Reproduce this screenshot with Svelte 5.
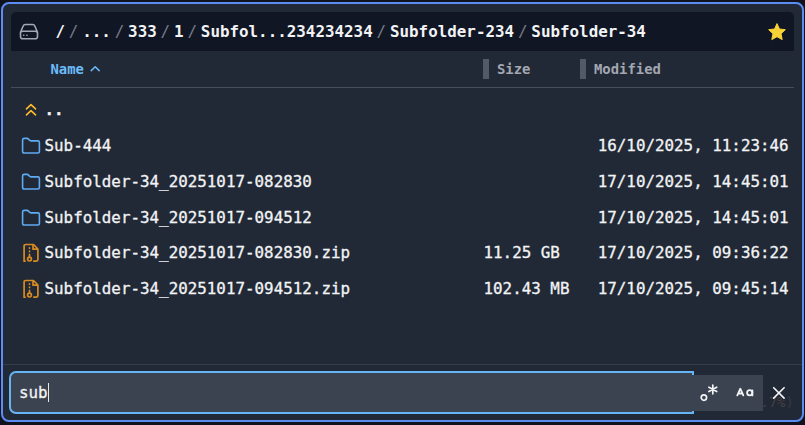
<script>
  const crumbs = ['/', '...', '333', '1', 'Subfol...234234234', 'Subfolder-234', 'Subfolder-34'];
  const rows = [
    { kind: 'up', name: '..', size: '', date: '' },
    { kind: 'folder', name: 'Sub-444', size: '', date: '16/10/2025, 11:23:46' },
    { kind: 'folder', name: 'Subfolder-34_20251017-082830', size: '', date: '17/10/2025, 14:45:01' },
    { kind: 'folder', name: 'Subfolder-34_20251017-094512', size: '', date: '17/10/2025, 14:45:01' },
    { kind: 'zip', name: 'Subfolder-34_20251017-082830.zip', size: '11.25 GB', date: '17/10/2025, 09:36:22' },
    { kind: 'zip', name: 'Subfolder-34_20251017-094512.zip', size: '102.43 MB', date: '17/10/2025, 09:45:14' }
  ];
</script>

<div class="page">
  <div class="panel">
    <header class="path">
      <svg class="drive" width="20" height="18" viewBox="0 0 20 18" fill="none" stroke="#a3a8b3" stroke-width="1.6" stroke-linejoin="round" stroke-linecap="round">
        <path d="M1.5 9.3 4.3 2.8Q4.8 1.5 6.2 1.5H13.8Q15.2 1.5 15.7 2.8L18.5 9.3V13.5Q18.5 15.8 16.2 15.8H3.8Q1.5 15.8 1.5 13.5ZM1.8 9.2Q2.6 8.3 3.8 8.3H16.2Q17.4 8.3 18.2 9.2" />
        <path d="M4.7 12.2h.1M7.9 12.2h.1" />
      </svg>
      <nav>
        {#each crumbs as crumb, i}
          {#if i > 0}<span class="sep">/</span>{/if}
          <b>{crumb}</b>
        {/each}
      </nav>
      <svg class="star" width="20" height="20" viewBox="0 0 20 20"><path d="M10 1.6 12.4 7 18.3 7.7 14 11.7 15.2 17.6 10 14.7 4.8 17.6 6 11.7 1.7 7.7 7.6 7Z" fill="#f9d336" stroke="#f9d336" stroke-width="1" stroke-linejoin="round" /></svg>
    </header>

    <div class="columns">
      <div class="name-head">Name
        <svg width="11" height="7" viewBox="0 0 11 7" fill="none" stroke="#6bbcfa" stroke-width="1.5" stroke-linecap="round" stroke-linejoin="round"><path d="M1.2 5.6 5.2 1.8 9.2 5.6" /></svg>
      </div>
      <div class="size-head"><i></i>Size</div>
      <div class="date-head"><i></i>Modified</div>
    </div>

    <div class="list">
      {#each rows as row}
        <div class="row">
          <span class="icon">
            {#if row.kind === 'up'}
              <svg width="20" height="20" viewBox="0 0 20 20" fill="none" stroke="#fdba28" stroke-width="1.6" stroke-linecap="round" stroke-linejoin="round"><path d="M5.5 8.9 10 4.7 14.5 8.9M5.5 14.9 10 10.7 14.5 14.9" /></svg>
            {:else if row.kind === 'folder'}
              <svg width="20" height="20" viewBox="0 0 20 20" fill="none" stroke="#5fabf2" stroke-width="1.6" stroke-linejoin="round"><path d="M1.6 15.4V4Q1.6 2.4 3.2 2.4H6Q7 2.4 7.6 3.2L8.3 4.1Q8.9 4.9 9.9 4.9H16.8Q18.4 4.9 18.4 6.5V15.4Q18.4 17 16.8 17H3.2Q1.6 17 1.6 15.4Z" /></svg>
            {:else}
              <svg width="20" height="20" viewBox="0 0 20 20" fill="none" stroke="#d78b20" stroke-width="1.7" stroke-linecap="round" stroke-linejoin="round"><path d="M4 18.2H3.1V3.1Q3.1 1.5 4.7 1.5H12.5L16.9 6V16.6Q16.9 18.2 15.3 18.2H12.9M12 1.8V6.2H16.6" /><path d="M8.5 4.9v.3M8.5 8.2v.3M8.5 11.3v2.4" /><circle cx="8.5" cy="16.1" r="1.9" /></svg>
            {/if}
          </span>
          <span class="name" class:parent={row.kind === 'up'}>{row.name}</span>
          <span class="size">{row.size}</span>
          <span class="date">{row.date}</span>
        </div>
      {/each}
    </div>

    <footer>
      <div class="input">sub<span class="caret"></span></div>
      <div class="tools">
        <svg width="20" height="20" viewBox="0 0 20 20" fill="none" stroke="#f1f3f5" stroke-width="1.7" stroke-linecap="round"><circle cx="4.9" cy="14.6" r="2.7" /><path d="M13.8 2V10.8M9.9 4.2 17.7 8.6M17.7 4.2 9.9 8.6" /></svg>
        <svg width="20" height="20" viewBox="0 0 20 20" fill="none" stroke="#f1f3f5" stroke-width="1.8" stroke-linecap="round" stroke-linejoin="round"><path d="M2.3 12.4 5.3 5.7 8.3 12.4M3.4 10.5H7.2M17.4 7.3V12.4" /><circle cx="14.7" cy="9.8" r="2.6" /></svg>
      </div>
      <span class="ghost"><span class="percent">.7%</span>)</span>
      <svg class="close" width="14" height="14" viewBox="0 0 14 14" fill="none" stroke="#f4f5f7" stroke-width="1.6" stroke-linecap="round"><path d="M1.7 1.7 12.1 12.1M12.1 1.7 1.7 12.1" /></svg>
    </footer>
  </div>
</div>

<style>
  :global(body) { background: #10131e; }
  .page {
    box-sizing: border-box;
    width: 805px;
    height: 425px;
    padding: 2px 1px 3px;
    font: 15.87px/20px "DejaVu Sans Mono", monospace;
    color: #f1f3f5;
    white-space: nowrap;
    overflow: hidden;
  }
  .panel {
    box-sizing: border-box;
    height: 420px;
    border: 2px solid #5b8df5;
    border-radius: 8px;
    background: #222936;
    display: flex;
    flex-direction: column;
    padding-top: 8px;
  }
  .path {
    height: 39px;
    margin: 0 8px;
    background: #111624;
    border-radius: 5px 5px 0 0;
    display: flex;
    align-items: center;
    padding: 0 7px 0 8px;
    flex: none;
  }
  nav { display: flex; gap: 3.85px; margin-left: 16.4px; flex: 1; }
  .sep { color: #757b87; }
  .columns {
    box-sizing: border-box;
    height: 37px;
    margin: 0 8px;
    border-bottom: 1px solid #474e5a;
    display: flex;
    align-items: center;
    font-size: 13.9px;
    font-weight: 700;
    color: #a2a7b1;
    flex: none;
    padding-bottom: 1px;
  }
  .name-head { width: 432.5px; padding-left: 39.5px; color: #6bbcfa; display: flex; align-items: center; gap: 6.5px; }
  .size-head { width: 97px; display: flex; align-items: center; gap: 8px; }
  .date-head { display: flex; align-items: center; gap: 8px; }
  .columns i { width: 6px; height: 20px; background: #525967; }
  .list { flex: 1; padding: 4.6px 13px 0 17.5px; }
  .row { height: 35.75px; display: flex; align-items: center; -webkit-text-stroke: 0.3px #f1f3f5; }
  .icon { width: 24px; height: 20px; flex: none; }
  .icon svg { display: block; }
  .name { width: 439px; }
  .parent { font-weight: 700; }
  .size { width: 114.2px; }
  footer {
    box-sizing: border-box;
    height: 56px;
    border-top: 1px solid #373e4a;
    display: flex;
    align-items: center;
    padding-left: 6px;
    flex: none;
    position: relative;
  }
  .input {
    box-sizing: border-box;
    width: 684.5px;
    height: 43.5px;
    border: 2px solid #65b5f5;
    border-radius: 7px 0 0 7px;
    background: #3b4250;
    padding-left: 8px;
    display: flex;
    align-items: center;
    -webkit-text-stroke: 0.3px #f1f3f5;
  }
  .caret { width: 1px; height: 19px; background: #e5e8ec; }
  .tools {
    box-sizing: border-box;
    width: 72px;
    height: 36px;
    margin-left: -2.5px;
    background: #3b4250;
    display: flex;
    align-items: center;
    gap: 16px;
    padding-left: 8px;
    z-index: 1;
  }
  .ghost { position: absolute; right: 8px; bottom: 8px; color: #343b48; font-size: 14px; }
  .percent { color: #463f40; }
  .close { margin-left: 9px; position: relative; }
</style>
